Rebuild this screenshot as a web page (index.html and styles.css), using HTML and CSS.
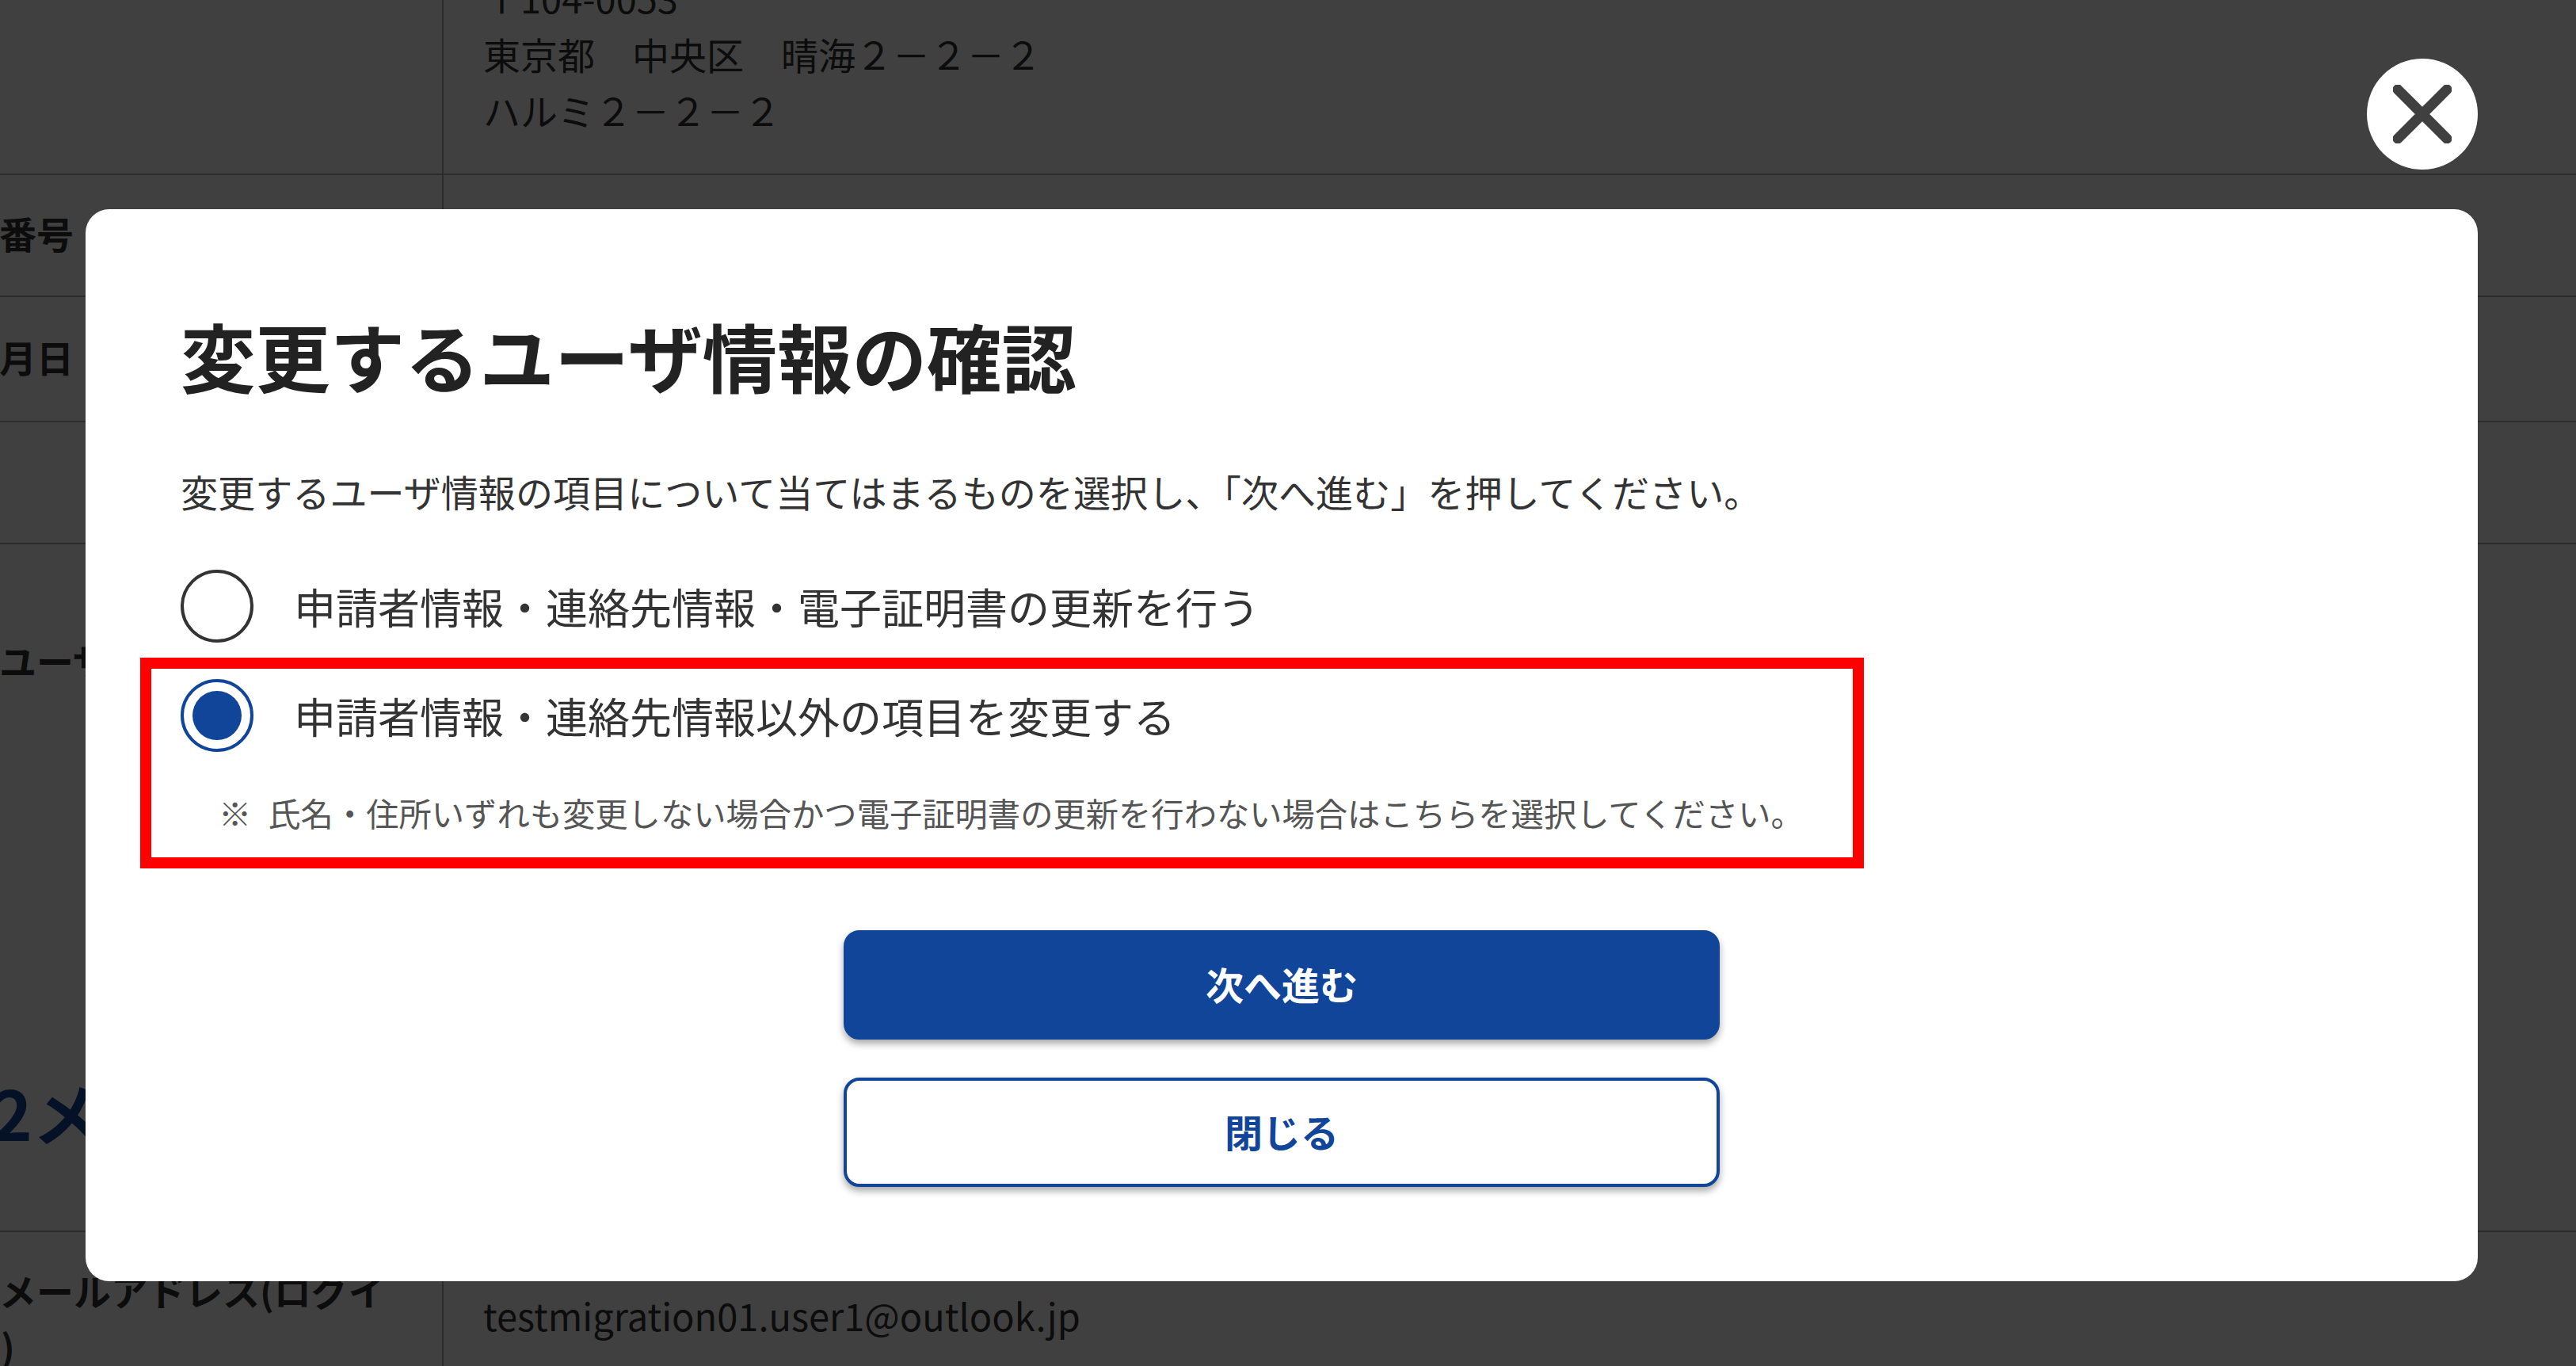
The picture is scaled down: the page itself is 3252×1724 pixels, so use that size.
FILE: index.html
```html
<!DOCTYPE html>
<html lang="ja">
<head>
    <meta charset="UTF-8">
    <title>変更するユーザ情報の確認</title>
    <link rel="stylesheet" href="styles.css">
</head>
<body>
    <div class="page">
        <!-- Background form -->
        <div class="detail-table">
            <div class="row row-address">
                <div class="row-head"></div>
                <div class="row-body">
                    <p>〒104-0053</p>
                    <p>東京都　中央区　晴海２－２－２</p>
                    <p>ハルミ２－２－２</p>
                </div>
            </div>
            <div class="row row-phone">
                <div class="row-head">電話番号</div>
                <div class="row-body"></div>
            </div>
            <div class="row row-birth">
                <div class="row-head">生年月日</div>
                <div class="row-body"></div>
            </div>
            <div class="row row-blank">
                <div class="row-head"></div>
                <div class="row-body"></div>
            </div>
            <div class="row row-user">
                <div class="row-head">利用ユーザ</div>
                <div class="row-body"></div>
            </div>
        </div>

        <h2 class="section-title">2メール</h2>

        <div class="detail-table">
            <div class="row row-mail">
                <div class="row-head">登録メールアドレス(ログイ<br>ンID)</div>
                <div class="row-body">testmigration01.user1@outlook.jp</div>
            </div>
        </div>
    </div>

    <!-- Modal -->
    <div class="overlay">
        <button class="close-btn" type="button" aria-label="閉じる">
            <svg class="close-icon" viewBox="0 0 74 74">
                <path d="M6 6 L68 68 M68 6 L6 68"></path>
            </svg>
        </button>

        <div class="modal">
            <h1 class="modal-title">変更するユーザ情報の確認</h1>
            <p class="modal-lead">変更するユーザ情報の項目について当てはまるものを選択し、「次へ進む」を押してください。</p>

            <label class="radio-row">
                <span class="radio"></span>
                <span>申請者情報・連絡先情報・電子証明書の更新を行う</span>
            </label>

            <div class="highlight">
                <label class="radio-row">
                    <span class="radio radio-on"></span>
                    <span>申請者情報・連絡先情報以外の項目を変更する</span>
                </label>
                <p class="note"><span>※</span><span>氏名・住所いずれも変更しない場合かつ電子証明書の更新を行わない場合はこちらを選択してください。</span></p>
            </div>

            <div class="modal-actions">
                <button class="btn btn-primary" type="button">次へ進む</button>
                <button class="btn btn-secondary" type="button">閉じる</button>
            </div>
        </div>
    </div>
</body>
</html>
```

FILE: styles.css
```css
* {
    margin: 0;
    padding: 0;
    box-sizing: border-box;
}

body {
    font-family: "Noto Sans CJK JP", "Noto Sans", sans-serif;
    background-color: #fff;
    color: #333;
    height: 100vh;
    overflow: hidden;
}

/* Background form */
.page {
    height: 100vh;
    overflow: hidden;
    margin-left: -150px;
    font-size: 47px;
    line-height: 71px;
}

.page .detail-table:first-child {
    margin-top: -39px;
}

.row {
    display: grid;
    grid-template-columns: 710px 1fr;
    border-bottom: 2px solid #b0b0b0;
}

.row-head {
    display: flex;
    align-items: center;
    padding-left: 55px;
    padding-bottom: 8px;
    font-weight: 700;
    border-right: 2px solid #b0b0b0;
}

.row-body {
    display: flex;
    flex-direction: column;
    justify-content: center;
    padding-left: 50px;
}

.row-address { height: 260px; }
.row-address .row-body { padding-bottom: 46px; }
.row-phone { height: 154px; }
.row-birth { height: 158px; }
.row-blank { height: 154px; }
.row-user { height: 298px; border-bottom: none; }

.section-title {
    margin: 370px 0 102px 140px;
    font-size: 86px;
    line-height: 96px;
    font-weight: 700;
    color: #114599;
}

.row-mail {
    border-top: 2px solid #b0b0b0;
    height: 240px;
}

.row-mail .row-head {
    align-items: flex-start;
    padding-top: 37px;
}

.row-mail .row-body {
    justify-content: flex-start;
    padding-top: 69px;
}

/* Overlay and modal */
.overlay {
    position: absolute;
    top: 0;
    left: 0;
    width: 100%;
    height: 100%;
    display: flex;
    flex-direction: column;
    align-items: flex-end;
    padding: 74px 124px 0 108px;
    background-color: rgba(0, 0, 0, 0.75);
}

.close-btn {
    width: 140px;
    height: 140px;
    margin-bottom: 50px;
    display: flex;
    align-items: center;
    justify-content: center;
    border: none;
    border-radius: 50%;
    background-color: #fff;
}

.close-icon {
    width: 74px;
    height: 74px;
}

.close-icon path {
    fill: none;
    stroke: #404040;
    stroke-width: 13;
    stroke-linecap: round;
}

.modal {
    width: 100%;
    padding: 116px 120px 119px;
    background-color: #fff;
    border-radius: 30px;
}

.modal-title {
    font-size: 94.4px;
    line-height: 136px;
    font-weight: 700;
    color: #222;
}

.modal-lead {
    margin-top: 69px;
    margin-bottom: 64px;
    font-size: 47.1px;
    line-height: 70px;
}

.radio-row {
    display: flex;
    align-items: center;
    gap: 51px;
    font-size: 53px;
    line-height: 92px;
}

.radio {
    flex: none;
    width: 92px;
    height: 92px;
    display: flex;
    align-items: center;
    justify-content: center;
    border: 4px solid #333;
    border-radius: 50%;
    background-color: #fff;
}

.radio-on {
    border-color: #114599;
}

.radio-on::after {
    content: "";
    width: 62px;
    height: 62px;
    border-radius: 50%;
    background-color: #114599;
}

/* Red annotation around the selected option */
.highlight {
    width: 2176px;
    margin: 19px 0 0 -51px;
    padding: 13px 37px 27px;
    border: 14px solid #f00;
}

.note {
    display: flex;
    gap: 21px;
    margin: 46px 0 0 48px;
    font-size: 41.3px;
    line-height: 60px;
    color: #555;
}

.modal-actions {
    display: flex;
    flex-direction: column;
    align-items: center;
    gap: 48px;
    margin-top: 78px;
}

.btn {
    width: 1106px;
    height: 138px;
    padding-bottom: 4px;
    border: 4px solid #114599;
    border-radius: 20px;
    font-family: inherit;
    font-size: 48px;
    font-weight: 700;
    box-shadow: 0 5px 10px rgba(0, 0, 0, 0.35);
}

.btn-primary {
    background-color: #114599;
    color: #fff;
}

.btn-secondary {
    background-color: #fff;
    color: #114599;
}
```
